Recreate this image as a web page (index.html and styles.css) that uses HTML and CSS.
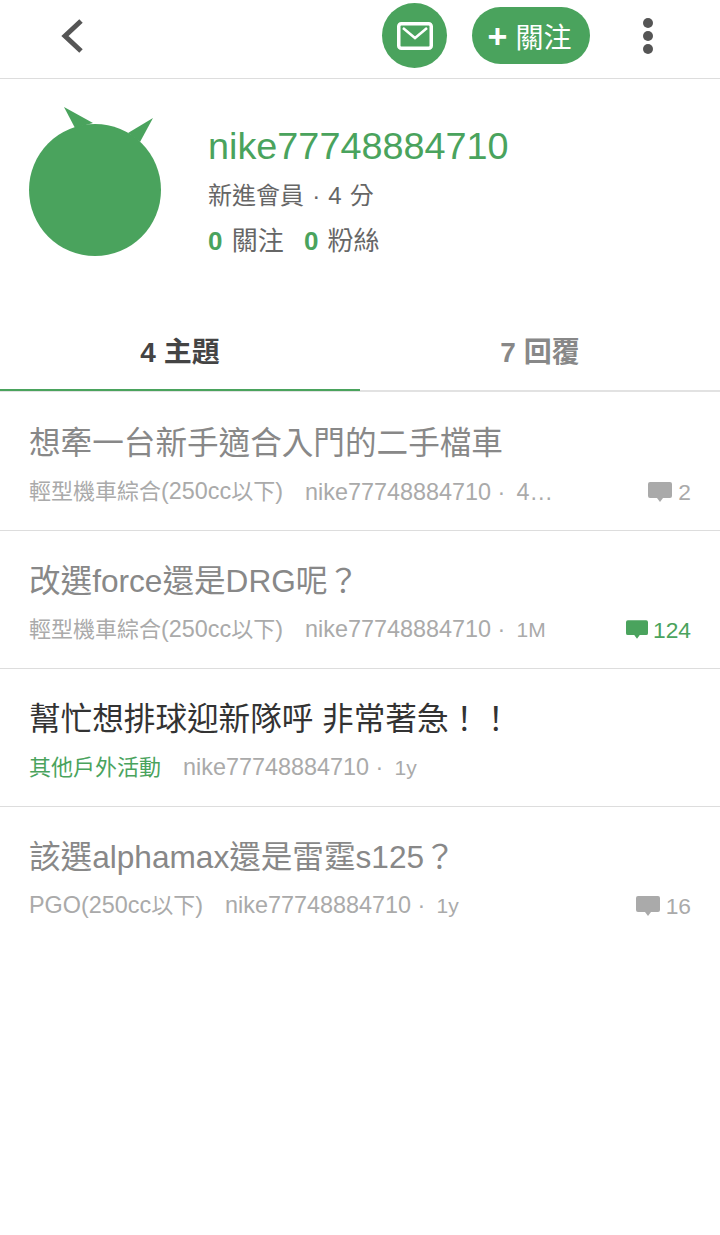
FILE: index.html
```html
<!DOCTYPE html>
<html lang="zh-Hant">
<head>
    <meta charset="UTF-8">
    <meta name="viewport" content="width=device-width, initial-scale=1.0">
    <title>nike77748884710</title>
    <link rel="stylesheet" href="styles.css">
</head>
<body>
    <!-- Top bar -->
    <header class="topbar">
        <svg class="back-icon" width="24" height="36" viewBox="0 0 24 36"><path d="M21 3 L5 18 L21 33" fill="none" stroke="#555" stroke-width="5"/></svg>
        <div class="mail-button">
            <svg width="36" height="28" viewBox="0 0 36 28"><rect x="1.75" y="1.75" width="32.5" height="24.5" rx="2.5" fill="none" stroke="#fff" stroke-width="3.5"/><path d="M6 6 L18 16 L30 6" fill="none" stroke="#fff" stroke-width="2.5"/></svg>
        </div>
        <div class="follow-button"><span class="plus">+</span> 關注</div>
        <div class="more-dots"><i></i><i></i><i></i></div>
    </header>

    <!-- Profile -->
    <section class="profile">
        <svg class="avatar" width="134" height="152" viewBox="0 0 134 152">
            <circle cx="66" cy="84" r="66" fill="#4aa35d"/>
            <path d="M35 1 L64 17 L46 22 Z" fill="#4aa35d"/>
            <path d="M124 12 L111 36 L99 27 Z" fill="#4aa35d"/>
        </svg>
        <div class="profile-info">
            <div class="username">nike77748884710</div>
            <div class="rank">新進會員 · 4 分</div>
            <div class="stats"><b>0</b> 關注 <b class="second">0</b> 粉絲</div>
        </div>
    </section>

    <!-- Tabs -->
    <nav class="tabs">
        <div class="tab active">4 主題</div>
        <div class="tab">7 回覆</div>
    </nav>

    <!-- Topic list -->
    <ul class="topics">
        <li class="topic read">
            <h2>想牽一台新手適合入門的二手檔車</h2>
            <div class="meta">
                <span class="board">輕型機車綜合<span class="latin">(250cc</span>以下<span class="latin">)</span></span>
                <span class="byline">nike77748884710 · &thinsp;<span class="cut">4...</span></span>
                <span class="replies">
                    <svg width="24" height="20" viewBox="0 0 24 20"><path d="M2 0 H22 a2 2 0 0 1 2 2 V14 a2 2 0 0 1 -2 2 H15 L12 20 L9 16 H2 a2 2 0 0 1 -2 -2 V2 a2 2 0 0 1 2 -2 Z" fill="#aaa"/></svg>2
                </span>
            </div>
        </li>
        <li class="topic read">
            <h2>改選force還是DRG呢？</h2>
            <div class="meta">
                <span class="board">輕型機車綜合<span class="latin">(250cc</span>以下<span class="latin">)</span></span>
                <span class="byline">nike77748884710 · &thinsp;<span class="age">1M</span></span>
                <span class="replies hot">
                    <svg width="22" height="19" viewBox="0 0 24 20"><path d="M2 0 H22 a2 2 0 0 1 2 2 V14 a2 2 0 0 1 -2 2 H15 L12 20 L9 16 H2 a2 2 0 0 1 -2 -2 V2 a2 2 0 0 1 2 -2 Z" fill="#4aa35d"/></svg>124
                </span>
            </div>
        </li>
        <li class="topic">
            <h2>幫忙想排球迎新隊呼 非常著急！！</h2>
            <div class="meta">
                <span class="board hot">其他戶外活動</span>
                <span class="byline">nike77748884710 · &thinsp;<span class="age">1y</span></span>
            </div>
        </li>
        <li class="topic read">
            <h2>該選alphamax還是雷霆s125？</h2>
            <div class="meta">
                <span class="board"><span class="latin">PGO(250cc</span>以下<span class="latin">)</span></span>
                <span class="byline">nike77748884710 · &thinsp;<span class="age">1y</span></span>
                <span class="replies">
                    <svg width="24" height="20" viewBox="0 0 24 20"><path d="M2 0 H22 a2 2 0 0 1 2 2 V14 a2 2 0 0 1 -2 2 H15 L12 20 L9 16 H2 a2 2 0 0 1 -2 -2 V2 a2 2 0 0 1 2 -2 Z" fill="#aaa"/></svg>16
                </span>
            </div>
        </li>
    </ul>
</body>
</html>
```

FILE: styles.css
```css
body {
    font-family: "Liberation Sans", "Noto Sans CJK TC", sans-serif;
    margin: 0;
    padding: 0;
    background-color: #fff;
    color: #333;
}

/* Top bar */
.topbar {
    display: flex;
    align-items: center;
    height: 78px;
    border-bottom: 1px solid #ddd;
    padding-left: 60px;
    padding-right: 67px;
}

.back-icon {
    margin-right: auto;
    margin-top: -7px;
}

.mail-button {
    display: flex;
    align-items: center;
    justify-content: center;
    width: 65px;
    height: 65px;
    margin-top: -7px;
    border-radius: 50%;
    background-color: #4aa35d;
}

.follow-button {
    display: flex;
    align-items: center;
    justify-content: center;
    gap: 8px;
    box-sizing: border-box;
    width: 118px;
    height: 57px;
    padding-right: 3px;
    margin-left: 25px;
    margin-right: 53px;
    margin-top: -7px;
    border-radius: 29px;
    background-color: #4aa35d;
    color: #fff;
    font-size: 28px;
}

.plus {
    font-size: 34px;
    font-weight: bold;
    line-height: 1;
}

.more-dots {
    display: flex;
    flex-direction: column;
    gap: 3px;
    margin-top: -6px;
}

.more-dots i {
    display: block;
    width: 10px;
    height: 10px;
    border-radius: 50%;
    background-color: #555;
}

/* Profile */
.profile {
    display: flex;
    padding: 27px 0 0 29px;
    height: 208px;
}

.avatar {
    flex: none;
}

.profile-info {
    margin-left: 45px;
    padding-top: 18px;
}

.username {
    color: #4aa35d;
    font-size: 37.8px;
    line-height: 44px;
}

.rank {
    margin-top: 12px;
    color: #666;
    font-size: 24px;
    line-height: 32px;
    word-spacing: 1.5px;
}

.stats {
    margin-top: 13px;
    color: #666;
    font-size: 26px;
    line-height: 32px;
    word-spacing: 2px;
}

.stats b {
    color: #4aa35d;
}

.stats .second {
    margin-left: 11px;
}

/* Tabs */
.tabs {
    display: flex;
    border-bottom: 2px solid #e2e2e2;
}

.tab {
    flex: 1;
    height: 75px;
    line-height: 77px;
    text-align: center;
    color: #888;
    font-size: 28px;
    font-weight: bold;
}

.tab.active {
    color: #444;
    margin-bottom: -1px;
    border-bottom: 2px solid #4aa35d;
}

/* Topic list */
.topics {
    list-style: none;
    margin: 1px 0 0;
    padding: 0;
}

.topic {
    height: 137px;
    padding: 0 29px;
    border-bottom: 1px solid #ddd;
}

.topic:last-child {
    border-bottom: none;
}

.topic h2 {
    margin: 0;
    padding-top: 31px;
    font-size: 31.6px;
    font-weight: normal;
    line-height: 38px;
}

.topic.read h2 {
    color: #888;
}

.meta {
    display: flex;
    align-items: center;
    margin-top: 13px;
    color: #aaa;
    font-size: 23.4px;
    line-height: 32px;
    white-space: nowrap;
}

.board {
    margin-right: 22px;
    font-size: 22px;
}

.board .latin {
    font-size: 23.4px;
}

.board.hot {
    color: #4aa35d;
}

.cut {
    letter-spacing: 1px;
}

.age {
    font-size: 21px;
}

.replies {
    display: flex;
    align-items: center;
    gap: 6px;
    margin-left: auto;
    font-size: 22.8px;
}

.replies.hot {
    gap: 5px;
    color: #4aa35d;
}
```
